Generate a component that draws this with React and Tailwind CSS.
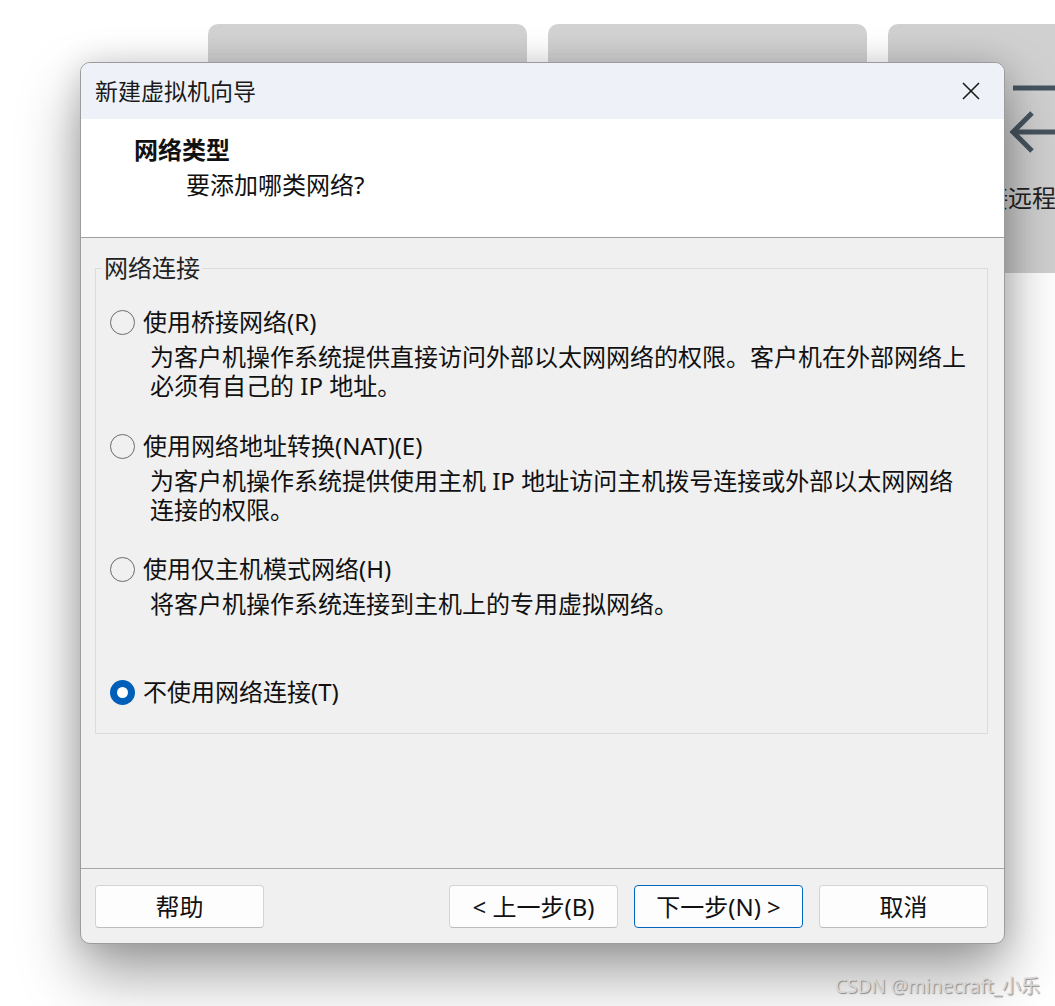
import React from 'react';

const font = "font-['Noto_Sans','Noto_Sans_CJK_SC',sans-serif]";

function Radio({ checked }) {
  if (checked) {
    return (
      <span className="flex h-[25px] w-[25px] shrink-0 items-center justify-center rounded-full bg-[#005fb8]">
        <span className="h-[11px] w-[11px] rounded-full bg-white" />
      </span>
    );
  }
  return <span className="h-[25px] w-[25px] shrink-0 rounded-full border-[1.5px] border-[#6b6b6b]" />;
}

function Option({ label, checked, lines, className = '' }) {
  return (
    <div className={className}>
      <div className="flex h-[30px] items-center gap-[8px]">
        <Radio checked={checked} />
        <span className="leading-[30px] text-[#111]">{label}</span>
      </div>
      {lines && (
        <div className="ml-[40px] mt-[5px] whitespace-nowrap leading-[29px] text-[#111]">
          {lines.map((l, i) => (
            <div key={i}>{l}</div>
          ))}
        </div>
      )}
    </div>
  );
}

function Btn({ children, primary }) {
  return (
    <button
      className={
        'flex h-[43px] w-[169px] items-center justify-center rounded-[4px] bg-[#fdfdfd] text-[24px] text-[#111] ' +
        (primary ? 'border border-[#0067c0]' : 'border border-[#d4d4d4] border-b-[#bdbdbd]')
      }
    >
      {children}
    </button>
  );
}

export default function App() {
  return (
    <div className={`relative h-[1006px] w-[1055px] overflow-hidden bg-white text-[24px] ${font}`}>
      {/* app behind the dialog */}
      <div className="flex gap-[21px] pl-[208px] pt-[24px]">
        <div className="h-[249px] w-[319px] shrink-0 rounded-t-[10px] bg-[#d2d2d2]" />
        <div className="h-[249px] w-[319px] shrink-0 rounded-t-[10px] bg-[#d2d2d2]" />
        <div className="flex h-[249px] w-[319px] shrink-0 flex-col items-start overflow-hidden rounded-t-[10px] bg-[#d0d0d0] pl-[72px] pt-[56px]">
          <svg className="ml-[45px]" width="60" height="80" viewBox="0 0 60 80" fill="none" stroke="#47545f" strokeWidth="5">
            <path d="M8 8H60" />
            <path d="M8 52H60" />
            <path d="M27 33L8 52L27 71" />
          </svg>
          <div className="mt-[22px] whitespace-nowrap leading-[32px] text-[#222]">连接远程</div>
        </div>
      </div>

      {/* dialog */}
      <div className="absolute left-[80px] top-[62px] flex h-[882px] w-[925px] flex-col overflow-hidden rounded-[10px] border border-[#9c9c9c] bg-[#f0f0f0] shadow-[0_30px_60px_rgba(0,0,0,0.38),0_0_30px_rgba(0,0,0,0.14)]">
        <div className="flex h-[56px] shrink-0 items-center justify-between bg-[#eef2f8] pl-[14px] pr-[24px]">
          <span className="text-[23px] leading-[30px] text-[#1a1a1a]">新建虚拟机向导</span>
          <svg width="18" height="18" viewBox="0 0 18 18" stroke="#1a1a1a" strokeWidth="1.6">
            <path d="M1 1L17 17M17 1L1 17" />
          </svg>
        </div>

        <div className="h-[119px] shrink-0 border-b border-[#a0a0a0] bg-white pl-[53px] pt-[15px]">
          <div className="font-bold leading-[32px] text-[#111]">网络类型</div>
          <div className="mt-[3px] pl-[52px] leading-[32px] text-[#111]">要添加哪类网络?</div>
        </div>

        <div className="flex-1 pl-[14px] pr-[16px] pt-[18px]">
          <fieldset className="border border-[#dcdcdc] pb-[26px] pl-[14px] pt-[27px]">
            <legend className="ml-[-8px] px-[2px] leading-[24px] text-[#222]">网络连接</legend>
            <Option
              label="使用桥接网络(R)"
              lines={['为客户机操作系统提供直接访问外部以太网网络的权限。客户机在外部网络上', '必须有自己的 IP 地址。']}
            />
            <Option
              className="mt-[31px]"
              label="使用网络地址转换(NAT)(E)"
              lines={['为客户机操作系统提供使用主机 IP 地址访问主机拨号连接或外部以太网网络', '连接的权限。']}
            />
            <Option className="mt-[30px]" label="使用仅主机模式网络(H)" lines={['将客户机操作系统连接到主机上的专用虚拟网络。']} />
            <Option className="mt-[59px]" label="不使用网络连接(T)" checked />
          </fieldset>
        </div>

        <div className="flex h-[75px] shrink-0 border-t border-[#a8a8a8] pl-[14px] pr-[16px] pt-[16px]">
          <Btn>帮助</Btn>
          <div className="ml-auto flex gap-[16px]">
            <Btn>&lt; 上一步(B)</Btn>
            <Btn primary>下一步(N) &gt;</Btn>
            <Btn>取消</Btn>
          </div>
        </div>
      </div>

      <div className="absolute bottom-[8px] right-[15px] text-[19px] leading-[24px] text-[#d6d6d6] [text-shadow:1px_1px_1px_#8a8a8a]">
        CSDN @minecraft_小乐
      </div>
    </div>
  );
}
